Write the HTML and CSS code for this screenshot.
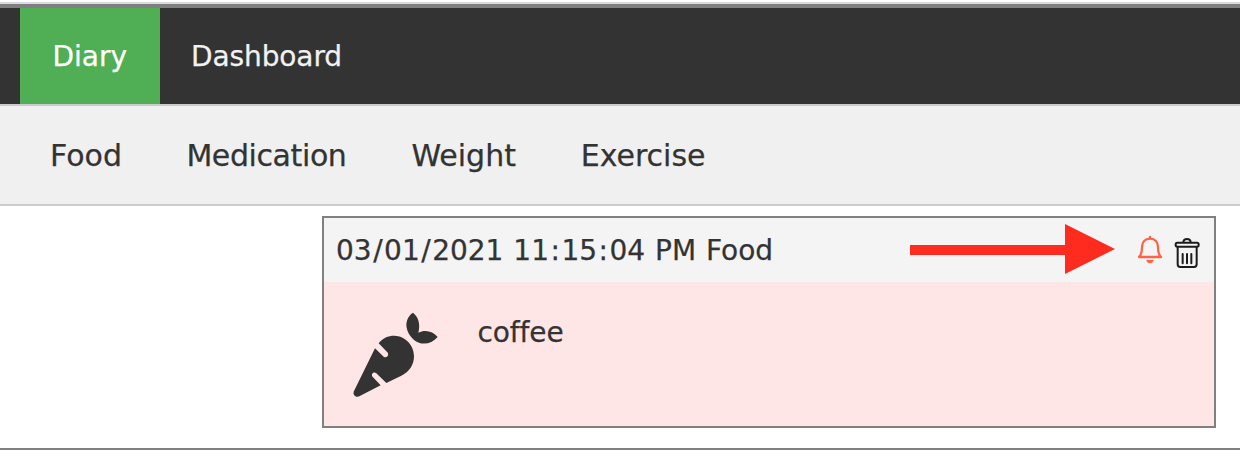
FILE: index.html
```html
<!DOCTYPE html>
<html lang="en">
<head>
<meta charset="utf-8">
<title>Diary</title>
<link rel="stylesheet" href="styles.css">
</head>
<body>
<nav class="topnav">
  <a class="tab active"><span class="diary">Diary</span></a>
  <a class="tab"><span class="dashboard">Dashboard</span></a>
</nav>
<nav class="subnav">
  <a class="food">Food</a>
  <a class="medication">Medication</a>
  <a class="weight">Weight</a>
  <a class="exercise">Exercise</a>
</nav>
<main class="content">
  <article class="card">
    <header class="card-head">
      <span class="stamp">03<i>/</i>01<i>/</i>2021 11<i>:</i>15<i>:</i>04 PM <span class="kind">Food</span></span>
      <svg class="arrow" width="206" height="50" viewBox="0 0 206 50"><path fill="#ff2b1e" d="M0 21H155V0L205 25L155 50V31H0Z"/></svg>
      <svg class="actions" width="74" height="42" viewBox="42 60 222 126" fill="none" stroke-linecap="round" stroke-linejoin="round">
        <g stroke="#ff6347" stroke-width="7">
          <path d="M57 141C65 134 66 127 66 112C66 96 75 86 90 86C105 86 114 96 114 112C114 127 115 134 123 141Z"/>
          <path d="M90 84V81"/>
          <path stroke="none" fill="#ff6347" d="M79 150H101C99 163 81 163 79 150Z"/>
        </g>
        <g stroke="#1c1c1c" stroke-width="6">
          <rect x="167" y="98" width="69" height="12" rx="5"/>
          <path d="M190 96Q191 87 201 87Q211 87 212 96"/>
          <path d="M173 112V163Q173 171 181 171H222Q230 171 230 163V112"/>
          <path d="M188 132V160M201 132V160M214 132V160"/>
        </g>
      </svg>
    </header>
    <div class="card-body">
      <svg class="carrot" width="120" height="110" viewBox="0 0 360 330">
        <path fill="#333" d="M219 38C203 48 197 66 200 83C203 99 214 115 230 125C250 136 276 131 293 111C279 94 256 88 235 98C241 75 237 52 219 38Z"/>
        <path fill="#333" d="M116 130C128 114 144 107 163 107C196 108 222 135 222 169C222 194 208 216 184 227L139 249L109 220C100 213 91 224 99 232L122 256L58 289C47 294 37 284 42 273L105 145L131 170C140 176 149 165 142 157Z"/>
      </svg>
      <span class="note">coffee</span>
    </div>
  </article>
</main>
</body>
</html>
```
FILE: styles.css
```css
* { box-sizing: border-box; }
body {
  margin: 0;
  height: 450px;
  overflow: hidden;
  background: #fff;
  color: #333;
  font: 28px/34px Verdana, "DejaVu Sans", sans-serif;
  -webkit-text-stroke: 0.25px;
  border-top: 2px solid #fff;
}
body::before {
  content: "";
  display: block;
  height: 2px;
  background: #dbdade;
}
.topnav {
  display: flex;
  height: 100px;
  padding-left: 20px;
  background: #333;
  border-top: 4px solid #808080;
}
.tab {
  display: flex;
  align-items: center;
  padding: 2px 32px 0 31px;
  color: #f2f2f2;
}
.active {
  width: 140px;
  padding-left: 32.5px;
  background: #50af55;
  color: #fff;
}
.dashboard { letter-spacing: -0.1px; }
.subnav {
  display: flex;
  align-items: center;
  gap: 64px;
  height: 102px;
  padding: 2px 0 0 50px;
  background: #f0f0f0;
  border-top: 2px solid #ccc;
  border-bottom: 2px solid #ccc;
  font-size: 30px;
}
.subnav a { white-space: nowrap; }
.food { width: 72.4px; }
.medication { width: 161px; letter-spacing: -0.4px; }
.weight { width: 105.3px; }
.content {
  height: 244px;
  padding: 10px 24px 20px 322px;
  border-bottom: 2px solid #808080;
}
.card {
  height: 212px;
  border: 2px solid #808080;
}
.card-head {
  display: flex;
  height: 64px;
  padding: 6px 6px 0 12px;
  background: #f4f4f4;
}
.stamp {
  padding-top: 10px;
  white-space: nowrap;
  word-spacing: 1px;
}
.stamp i {
  font-style: normal;
  padding: 0 1.5px;
}
.arrow { margin-left: auto; }
.actions { margin-left: 18px; margin-top: 6px; }
.card-body {
  display: flex;
  height: 144px;
  background: #ffe6e6;
}
.carrot { margin: 18px 0 0 16px; }
.note { padding: 34px 0 0 17.5px; letter-spacing: -0.1px; }
```
